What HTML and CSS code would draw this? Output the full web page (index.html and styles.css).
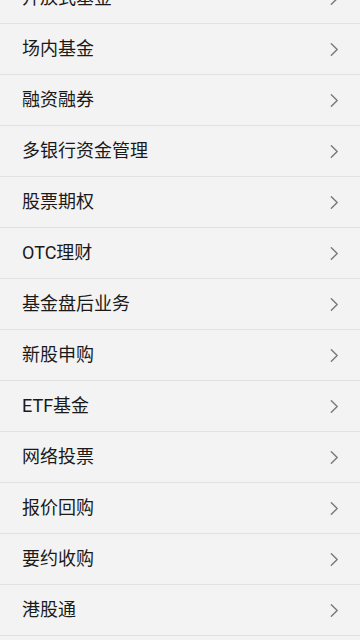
FILE: index.html
```html
<!DOCTYPE html>
<html lang="zh-CN">
<head>
<meta charset="utf-8">
<meta name="viewport" content="width=360, initial-scale=1">
<title>业务列表</title>
<link rel="stylesheet" href="styles.css">
</head>
<body>
<ul class="menu">
  <li class="menu-item"><span class="label">开放式基金</span><svg class="chev" viewBox="0 0 10 16"><path d="M1.5 1.5 L8 8 L1.5 14.5"/></svg></li>
  <li class="menu-item"><span class="label">场内基金</span><svg class="chev" viewBox="0 0 10 16"><path d="M1.5 1.5 L8 8 L1.5 14.5"/></svg></li>
  <li class="menu-item"><span class="label">融资融券</span><svg class="chev" viewBox="0 0 10 16"><path d="M1.5 1.5 L8 8 L1.5 14.5"/></svg></li>
  <li class="menu-item"><span class="label">多银行资金管理</span><svg class="chev" viewBox="0 0 10 16"><path d="M1.5 1.5 L8 8 L1.5 14.5"/></svg></li>
  <li class="menu-item"><span class="label">股票期权</span><svg class="chev" viewBox="0 0 10 16"><path d="M1.5 1.5 L8 8 L1.5 14.5"/></svg></li>
  <li class="menu-item"><span class="label">OTC理财</span><svg class="chev" viewBox="0 0 10 16"><path d="M1.5 1.5 L8 8 L1.5 14.5"/></svg></li>
  <li class="menu-item"><span class="label">基金盘后业务</span><svg class="chev" viewBox="0 0 10 16"><path d="M1.5 1.5 L8 8 L1.5 14.5"/></svg></li>
  <li class="menu-item"><span class="label">新股申购</span><svg class="chev" viewBox="0 0 10 16"><path d="M1.5 1.5 L8 8 L1.5 14.5"/></svg></li>
  <li class="menu-item"><span class="label">ETF基金</span><svg class="chev" viewBox="0 0 10 16"><path d="M1.5 1.5 L8 8 L1.5 14.5"/></svg></li>
  <li class="menu-item"><span class="label">网络投票</span><svg class="chev" viewBox="0 0 10 16"><path d="M1.5 1.5 L8 8 L1.5 14.5"/></svg></li>
  <li class="menu-item"><span class="label">报价回购</span><svg class="chev" viewBox="0 0 10 16"><path d="M1.5 1.5 L8 8 L1.5 14.5"/></svg></li>
  <li class="menu-item"><span class="label">要约收购</span><svg class="chev" viewBox="0 0 10 16"><path d="M1.5 1.5 L8 8 L1.5 14.5"/></svg></li>
  <li class="menu-item"><span class="label">港股通</span><svg class="chev" viewBox="0 0 10 16"><path d="M1.5 1.5 L8 8 L1.5 14.5"/></svg></li>
</ul>
</body>
</html>
```
FILE: styles.css
```css
html, body {
  margin: 0;
  padding: 0;
  background: #f3f3f3;
}
body {
  font-family: Roboto, "Noto Sans CJK SC", "Noto Sans", sans-serif;
  color: #1a1a1a;
  overflow: hidden;
  height: 640px;
}
.menu {
  list-style: none;
  margin: -27px 0 0 0;
  padding: 0;
}
.menu-item {
  display: flex;
  align-items: center;
  justify-content: space-between;
  height: 50px;
  border-bottom: 1px solid #e1e1e1;
  padding: 0 21px 0 22px;
}
.label {
  font-size: 18px;
  line-height: 24px;
  margin-top: -1px;
  font-weight: 400;
  color: #1a1a1a;
}
.chev {
  width: 9px;
  height: 15px;
  fill: none;
  stroke: #7a7a7a;
  stroke-width: 1.6;
  stroke-linecap: round;
  stroke-linejoin: round;
}
```
